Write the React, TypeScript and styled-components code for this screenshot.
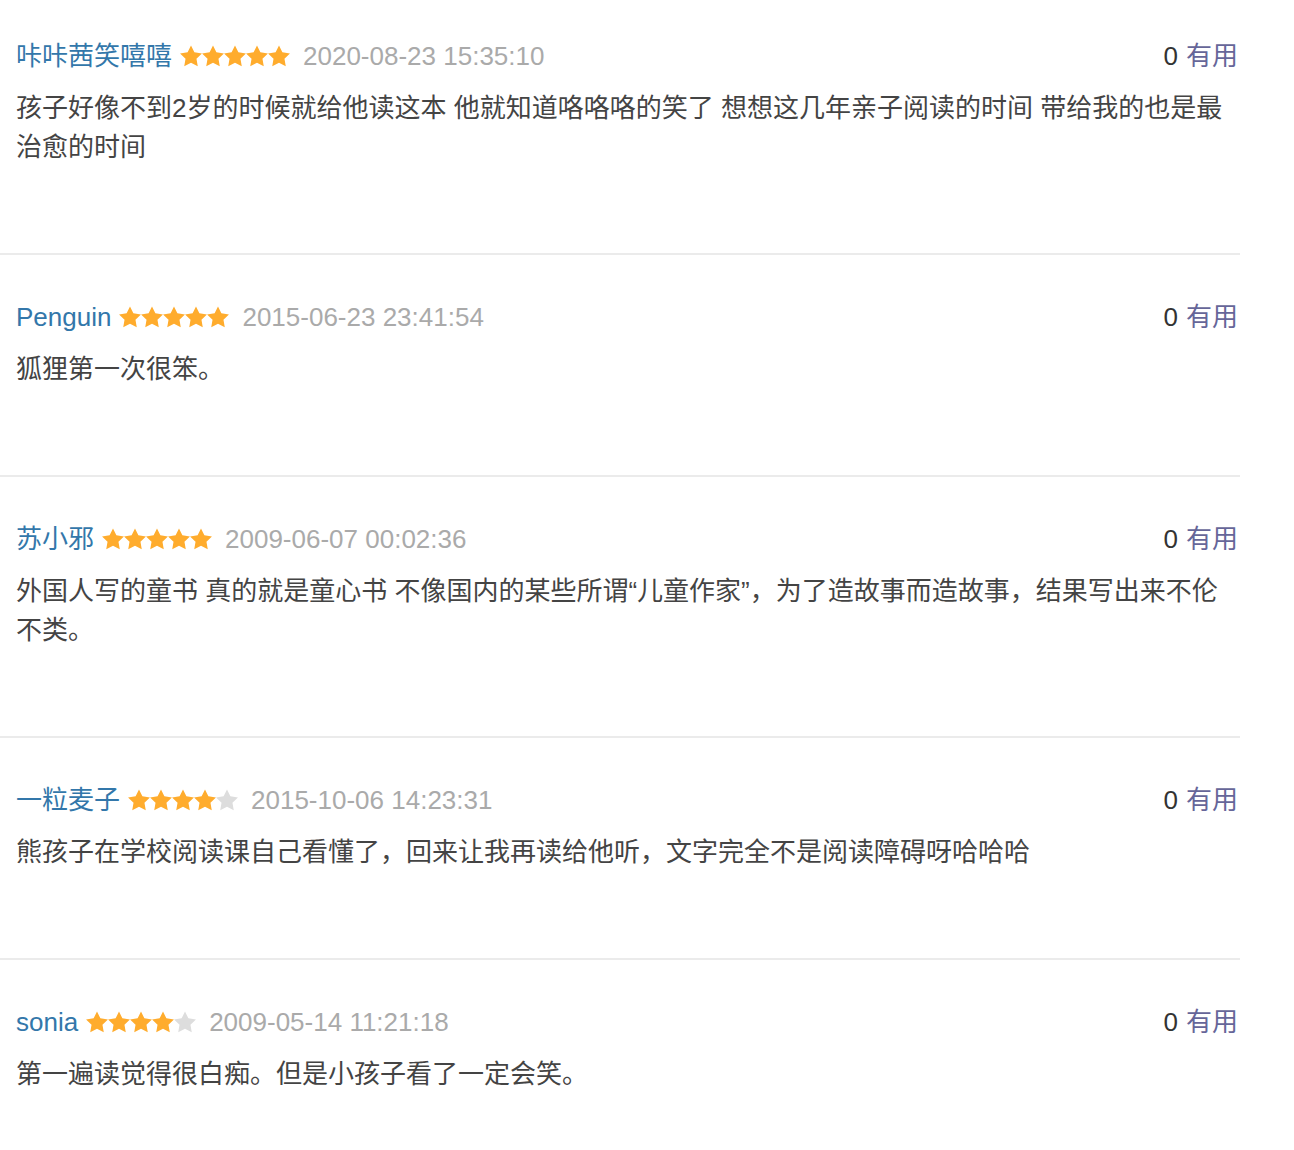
import styled, { createGlobalStyle } from 'styled-components'

const GlobalStyle = createGlobalStyle`
  body {
    margin: 0;
    background: #fff;
    font-family: "Liberation Sans", "Noto Sans CJK SC", sans-serif;
    color: #333;
  }
`

const List = styled.div`
  width: 1240px;
`

const Item = styled.div`
  padding: 43px 2px 86px 16px;
  border-bottom: 2px solid #ebebeb;
  &:first-child {
    padding-top: 37px;
  }
  &:last-child {
    border-bottom: none;
  }
`

const Header = styled.div`
  display: flex;
  align-items: center;
  height: 39px;
  line-height: 39px;
  font-size: 26px;
  margin-bottom: 13px;
`

const Author = styled.a`
  color: #3377aa;
  text-decoration: none;
  margin-right: 8px;
`

const Stars = styled.span`
  display: inline-flex;
  margin-right: 13px;
  margin-top: -2px;
  svg {
    display: block;
  }
`

const Time = styled.span`
  color: #aaa;
`

const Votes = styled.span`
  margin-left: auto;
  color: #333;
  margin-top: -1px;
  span {
    color: #666699;
    margin-left: 8px;
  }
`

const Content = styled.p`
  margin: 0;
  font-size: 26px;
  line-height: 39px;
  color: #444;
`

function Star({ on }: { on: boolean }) {
  return (
    <svg width='22' height='22' viewBox='0 0 22 22'>
      <polygon
        points='11,0.5 14.38,7.35 21.94,8.45 16.47,13.78 17.76,21.3 11,17.75 4.24,21.3 5.53,13.78 0.06,8.45 7.62,7.35'
        fill={on ? '#ffac2d' : '#dddddd'}
      />
    </svg>
  )
}

const reviews = [
  {
    author: '咔咔茜笑嘻嘻',
    rating: 5,
    time: '2020-08-23 15:35:10',
    text: '孩子好像不到2岁的时候就给他读这本 他就知道咯咯咯的笑了 想想这几年亲子阅读的时间 带给我的也是最治愈的时间',
  },
  { author: 'Penguin', rating: 5, time: '2015-06-23 23:41:54', text: '狐狸第一次很笨。' },
  {
    author: '苏小邪',
    rating: 5,
    time: '2009-06-07 00:02:36',
    text: '外国人写的童书 真的就是童心书 不像国内的某些所谓“儿童作家”，为了造故事而造故事，结果写出来不伦不类。',
  },
  {
    author: '一粒麦子',
    rating: 4,
    time: '2015-10-06 14:23:31',
    text: '熊孩子在学校阅读课自己看懂了，回来让我再读给他听，文字完全不是阅读障碍呀哈哈哈',
  },
  { author: 'sonia', rating: 4, time: '2009-05-14 11:21:18', text: '第一遍读觉得很白痴。但是小孩子看了一定会笑。' },
]

export default function App() {
  return (
    <>
      <GlobalStyle />
      <List>
        {reviews.map((r) => (
          <Item key={r.time}>
            <Header>
              <Author href='#'>{r.author}</Author>
              <Stars>
                {[1, 2, 3, 4, 5].map((n) => (
                  <Star key={n} on={n <= r.rating} />
                ))}
              </Stars>
              <Time>{r.time}</Time>
              <Votes>
                0<span>有用</span>
              </Votes>
            </Header>
            <Content>{r.text}</Content>
          </Item>
        ))}
      </List>
    </>
  )
}
